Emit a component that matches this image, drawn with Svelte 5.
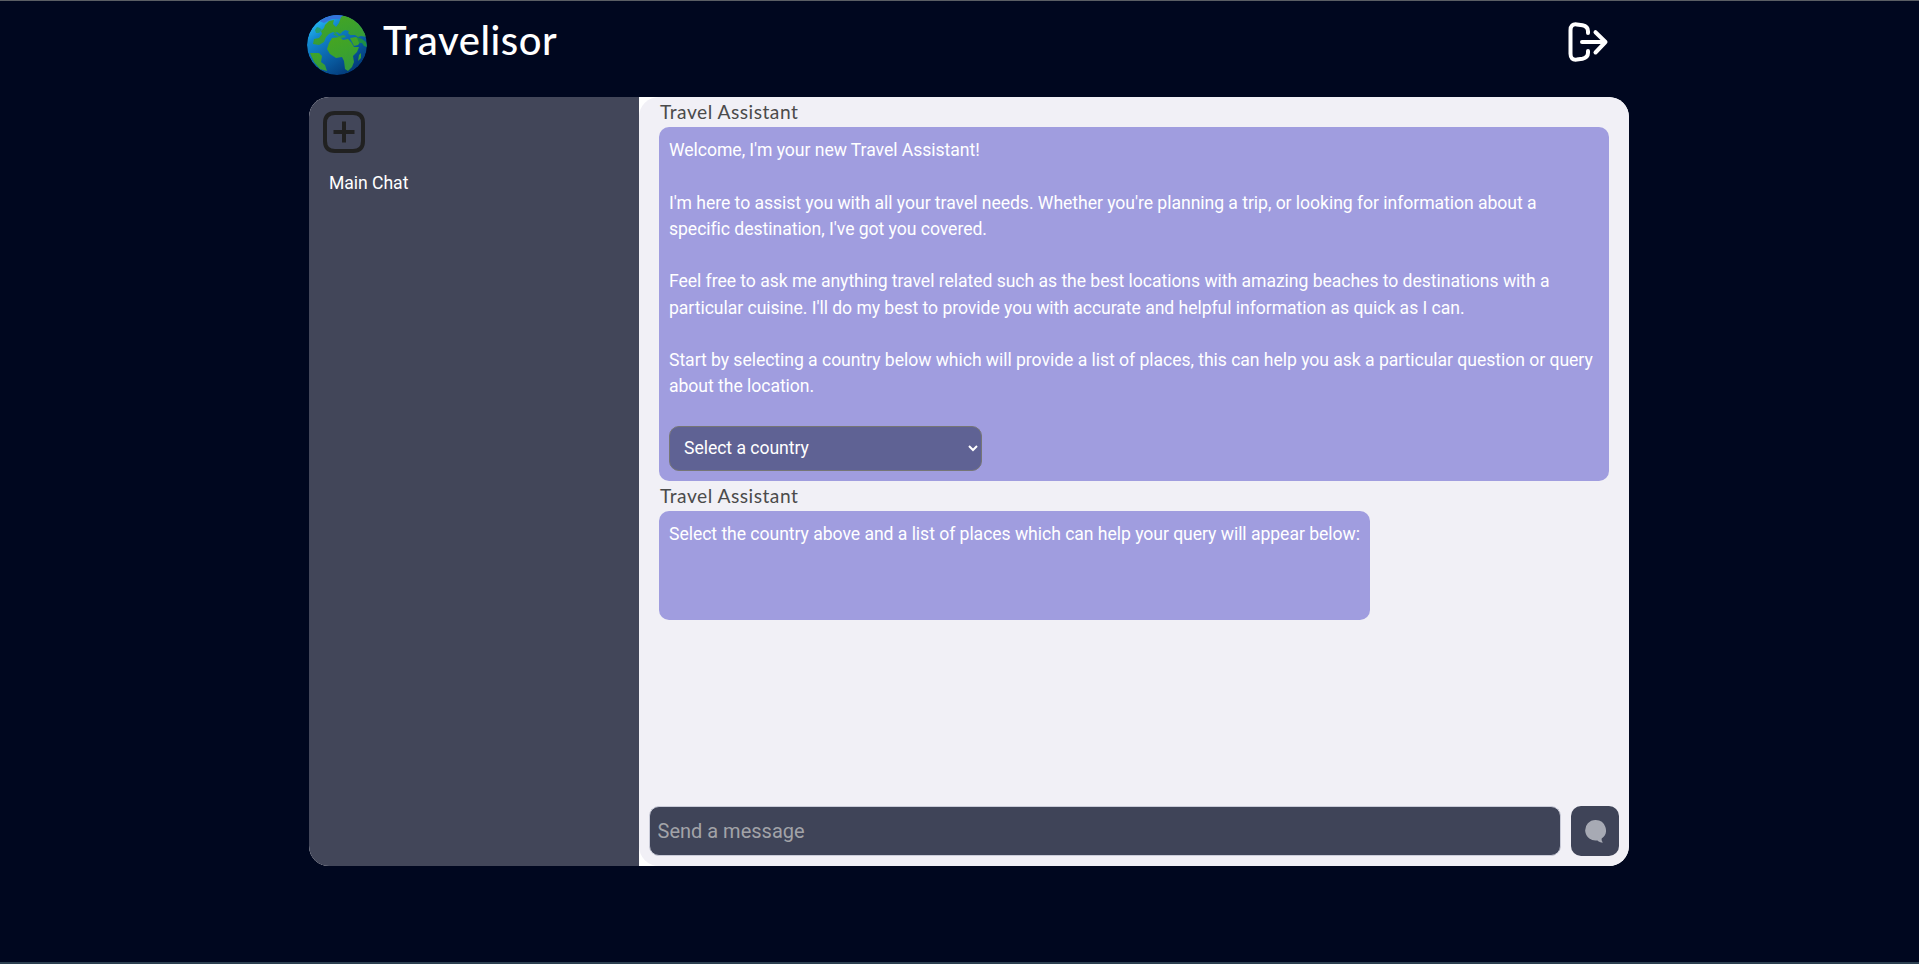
<script>
  let country = $state('');
  let message = $state('');
</script>

<div class="page">
  <header>
    <svg class="globe" viewBox="0 0 60 60" aria-hidden="true">
      <defs>
        <linearGradient id="sea" x1="0" y1=".1" x2=".6" y2="1">
          <stop offset="0" stop-color="#2cc8ff" />
          <stop offset=".3" stop-color="#1287cf" />
          <stop offset=".65" stop-color="#0a62a8" />
          <stop offset="1" stop-color="#033c7c" />
        </linearGradient>
        <linearGradient id="land" x1="0" y1="0" x2=".4" y2="1">
          <stop offset="0" stop-color="#48a520" />
          <stop offset=".55" stop-color="#3ca22c" />
          <stop offset="1" stop-color="#349a3c" />
        </linearGradient>
        <clipPath id="disc"><circle cx="30" cy="30" r="30" /></clipPath>
      </defs>
      <g clip-path="url(#disc)">
        <circle cx="30" cy="30" r="30" fill="url(#sea)" />
        <path d="M12 6Q24 -2 36 0L33 4L25 4L17 8Z" fill="#3474dc" />
        <path d="M34 2L38 0H60V22L54 21L51 22L48 20L43 20L41 18L42 16L38 15L35 17L33 19L30 17L28 18L26 17L22 19L19 22L17 27L12 30L6 29L7 24L12 23L15 19L14 16L17 13L18 10L22 6L27 5L26 9L29 12L32 8Z" fill="url(#land)" />
        <path d="M8 15L10 12L13 13L15 15L12 18L9 18Z" fill="#239f75" />
        <path d="M26 19L29 18L32 21L37 20L39 22L35 23L29 21Z" fill="#2b9c48" />
        <path d="M35 17L38 16L41 17L39 19L35 19Z" fill="#0879b9" />
        <path d="M25 23L33 22L36 25L41 24L44 27L47 32L52 32L50 37L46 41L47 47L45 52L41 56L38 54L37 46L35 42L29 43L23 39L20 34L22 28Z" fill="url(#land)" />
        <path d="M43 23L49 22L54 26L51 30L47 31Z M52 40L54 38L54 43L51 46Z M3 38L12 38L15 41L14 47L18 50L20 56L13 54L7 47Z" fill="url(#land)" />
        <path d="M50 22L55 24L59 27L60 32L57 31L55 28L52 28Z" fill="#1c8e46" />
      </g>
    </svg>
    <h1>Travelisor</h1>
    <button class="logout" aria-label="Log out">
      <svg viewBox="0 0 40 40" fill="none" stroke="#fff" stroke-width="4" stroke-linecap="round" stroke-linejoin="round">
        <path d="M19.5 11V9.2Q19.5 4.5 14 3.3L8.3 2.4Q2 1.6 2 8.2V31.8Q2 38.4 8.3 37.6L14 36.7Q19.5 35.5 19.5 30.8V29" />
        <path d="M13.5 20H37M27 10.2L37 20L27 30.5" />
      </svg>
    </button>
  </header>

  <main>
    <aside>
      <button class="add" aria-label="New chat">
        <svg viewBox="0 0 42 42" fill="none" stroke="#212121" stroke-width="4">
          <path d="M12 2H30Q40 2 40 12V30Q40 40 30 40H12Q2 40 2 30V12Q2 2 12 2Z" />
          <path d="M21 10.5V31.5M10.5 21H31.5" />
        </svg>
      </button>
      <div class="chat-name">Main Chat</div>
    </aside>

    <section>
      <div class="messages">
        <div class="author">Travel Assistant</div>
        <article class="welcome">
          <p>Welcome, I'm your new Travel Assistant!</p>
          <p>I'm here to assist you with all your travel needs. Whether you're planning a trip, or looking for information about a<br />specific destination, I've got you covered.</p>
          <p>Feel free to ask me anything travel related such as the best locations with amazing beaches to destinations with a<br />particular cuisine. I'll do my best to provide you with accurate and helpful information as quick as I can.</p>
          <p>Start by selecting a country below which will provide a list of places, this can help you ask a particular question or query<br />about the location.</p>
          <select bind:value={country}>
            <option value="">Select a country</option>
          </select>
        </article>
        <div class="author">Travel Assistant</div>
        <article class="places">
          <p>Select the country above and a list of places which can help your query will appear below:</p>
        </article>
      </div>
      <form onsubmit={(e) => e.preventDefault()}>
        <input placeholder="Send a message" bind:value={message} />
        <button class="send" aria-label="Send">
          <svg viewBox="0 0 21 23">
            <path d="M10.5 0A10.3 10.3 0 1 0 12.5 20.4C14 21.8 15.8 22.6 18 22.5C16.8 21.5 16.4 20.2 16.7 18.6A10.3 10.3 0 0 0 10.5 0Z" fill="#a7aab4" />
          </svg>
        </button>
      </form>
    </section>
  </main>
</div>

<style>
  :global(body) { background: #00071f; }
  .page {
    box-sizing: border-box;
    height: 964px;
    border-top: 1px solid #5a5e64;
    border-bottom: 2px solid #2c3f50;
    font-family: Roboto, sans-serif;
    font-size: 17.6px;
    overflow: hidden;
  }
  button { padding: 0; border: 0; background: none; display: block; }
  svg { display: block; }
  header {
    display: flex;
    align-items: flex-start;
    width: 1302px;
    height: 96px;
    margin-left: 307px;
  }
  .globe { width: 60px; height: 60px; margin-top: 14px; }
  h1 {
    margin: 14px 0 0 16px;
    color: #fff;
    font: 500 40px/50px Lato, sans-serif;
    letter-spacing: 0.55px;
    white-space: nowrap;
  }
  .logout { margin: 20.5px 0 0 auto; }
  .logout svg { width: 41px; height: 40px; }
  main {
    display: flex;
    width: 1320px;
    height: 769px;
    margin-left: 309px;
    border-radius: 20px;
    background: #fff;
    overflow: hidden;
  }
  aside {
    box-sizing: border-box;
    width: 330px;
    padding: 14px;
    background: #424659;
  }
  .add svg { width: 42px; height: 42px; }
  .chat-name { margin: 17px 0 0 6px; line-height: 26px; color: #fff; letter-spacing: -0.045px; }
  section {
    box-sizing: border-box;
    display: flex;
    flex-direction: column;
    justify-content: space-between;
    width: 990px;
    padding: 0 10px 10px;
    border-radius: 20px;
    background: #f1f0f6;
  }
  .messages { padding: 0 10px; }
  .author {
    height: 30px;
    padding-left: 1px;
    color: #4b4b4b;
    font: 400 19.2px/30px Lato, sans-serif;
    letter-spacing: 0.5px;
  }
  article {
    box-sizing: border-box;
    padding: 10px;
    border-radius: 10px;
    background: #a09ddf;
    color: #fff;
    line-height: 26.25px;
    letter-spacing: -0.045px;
    white-space: nowrap;
  }
  .welcome { height: 354px; }
  .places { width: 711px; height: 109px; }
  p { margin: 0 0 26.25px; }
  select {
    display: block;
    box-sizing: border-box;
    width: 313px;
    height: 45px;
    padding: 0 11px 0 10px;
    border: 1px solid #767676;
    border-radius: 10px;
    background: #5f6294;
    color: #fff;
    font: 17.6px Roboto, sans-serif;
    letter-spacing: -0.045px;
  }
  form { display: flex; gap: 10px; }
  input {
    box-sizing: border-box;
    flex: 1;
    min-width: 0;
    height: 50px;
    padding: 0 7.5px;
    border: 1px solid #c9cbd8;
    border-radius: 10px;
    background: #3f4458;
    color: #fff;
    font: 20px Roboto, sans-serif;
  }
  input::placeholder { color: #a2a3a8; opacity: 1; }
  .send {
    display: grid;
    place-items: center;
    width: 48px;
    height: 50px;
    border-radius: 10px;
    background: #3f4458;
  }
  .send svg { width: 21px; height: 23px; }
</style>
